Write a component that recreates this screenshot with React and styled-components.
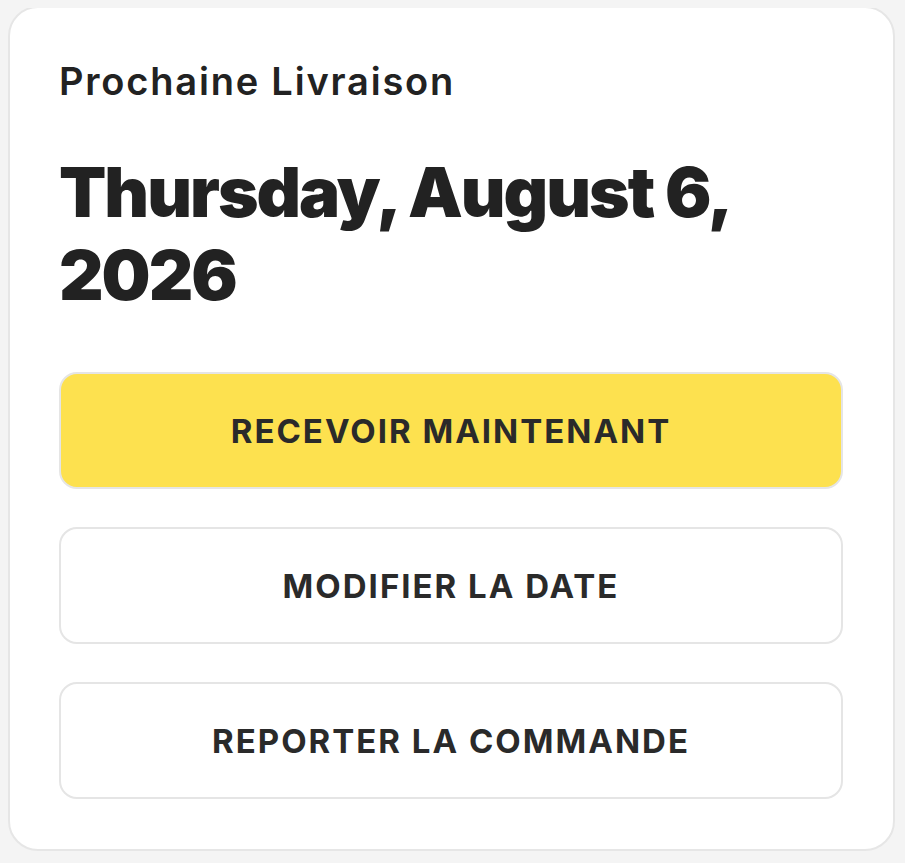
import styled, { createGlobalStyle } from "styled-components";

const GlobalStyle = createGlobalStyle`
  body {
    margin: 8px;
    background: #f4f4f4;
    font-family: "Inter", "Open Sans", sans-serif;
    color: #222;
  }
`;

const actions = [
  { label: "RECEVOIR MAINTENANT", primary: true },
  { label: "MODIFIER LA DATE" },
  { label: "REPORTER LA COMMANDE" },
];

const App = () => {
  return (
    <>
      <GlobalStyle />
      <Card>
        <Label>Prochaine Livraison</Label>
        <DeliveryDate>Thursday, August 6, 2026</DeliveryDate>
        <Actions>
          {actions.map((a) => (
            <ActionButton key={a.label} $primary={a.primary}>
              {a.label}
            </ActionButton>
          ))}
        </Actions>
      </Card>
    </>
  );
};

export default App;

const Card = styled.div`
  background: #fff;
  border: 2px solid #e6e6e6;
  border-radius: 30px;
  padding: 49px 50px 50px 49px;
  margin: -2px 2px 0 0;
  box-sizing: border-box;
`;

const Label = styled.h3`
  margin: 0;
  font-size: 38px;
  font-weight: 600;
  line-height: 48px;
  letter-spacing: 1.8px;
  color: #222;
`;

const DeliveryDate = styled.h1`
  margin: 46px 0 0;
  max-width: 700px;
  font-size: 69px;
  font-weight: 900;
  line-height: 83px;
  letter-spacing: -2px;
  color: #222;
`;

const Actions = styled.div`
  display: flex;
  flex-direction: column;
  gap: 38px;
  margin-top: 55px;
`;

const ActionButton = styled.button`
  height: 117px;
  width: 100%;
  border: 2px solid #e5e5e5;
  border-radius: 18px;
  background: ${(p) => (p.$primary ? "#fde14f" : "#fff")};
  font-family: "Inter", "Open Sans", sans-serif;
  font-size: 33px;
  font-weight: 700;
  letter-spacing: 2px;
  color: #2a2a2a;
  cursor: pointer;
`;
